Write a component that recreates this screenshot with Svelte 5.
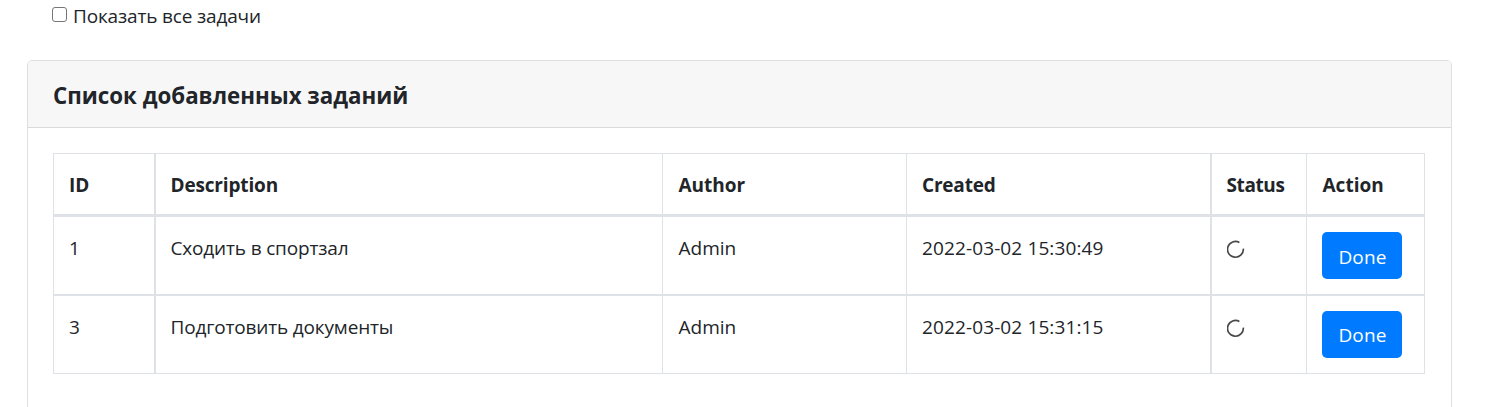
<script>
  const columns = ['ID', 'Description', 'Author', 'Created', 'Status', 'Action'];
  const widths = [103, 507, 244, 305, 95, 118];
  const tasks = [
    { id: 1, description: 'Сходить в спортзал', author: 'Admin', created: '2022-03-02 15:30:49' },
    { id: 3, description: 'Подготовить документы', author: 'Admin', created: '2022-03-02 15:31:15' }
  ];
  let showAll = $state(false);
</script>

<main>
  <label class="filter">
    <input type="checkbox" bind:checked={showAll} />
    <span>Показать все задачи</span>
  </label>

  <section class="card">
    <header><h1>Список добавленных заданий</h1></header>
    <table>
      <colgroup>
        {#each widths as width}<col style="width: {width}px" />{/each}
      </colgroup>
      <thead>
        <tr>
          {#each columns as name}<th>{name}</th>{/each}
        </tr>
      </thead>
      <tbody>
        {#each tasks as task}
          <tr>
            <td>{task.id}</td>
            <td class="task">{task.description}</td>
            <td>{task.author}</td>
            <td class="date">{task.created}</td>
            <td>
              <svg class="progress" width="18" height="20" viewBox="0 0 18 20" fill="none" stroke="#484848" stroke-width="1.7">
                <path d="M12.4 3.5A7.9 7.9 0 1 0 16.3 9.6" />
              </svg>
            </td>
            <td class="action-cell"><button type="button">Done</button></td>
          </tr>
        {/each}
      </tbody>
    </table>
  </section>
</main>

<style>
  :global(body) { margin: 0; background: #fff; overflow: hidden; }
  main {
    box-sizing: border-box;
    height: 407px;
    padding: 0 44px 0 27px;
    overflow: hidden;
    color: #212529;
    font: 19px/30px "Segoe UI", "Open Sans", "Noto Sans", sans-serif;
  }
  .filter { display: flex; height: 60px; padding-left: 25px; }
  .filter input {
    appearance: none;
    box-sizing: border-box;
    width: 15px;
    height: 15px;
    margin: 7px 6px 0 0;
    border: 1px solid #767676;
    border-radius: 3px;
    background: #fff;
  }
  .filter input:checked { background: #007bff; }
  .filter span { padding-top: 1px; letter-spacing: -0.16px; }
  .card {
    box-sizing: border-box;
    height: 400px;
    border: 1px solid #dfdfdf;
    border-radius: 5px;
  }
  header {
    box-sizing: border-box;
    height: 67px;
    padding: 20px 25px 18px;
    border-bottom: 1px solid #dadada;
    border-radius: 4px 4px 0 0;
    background: #f7f7f7;
  }
  h1 { margin: 0; font-size: 22.3px; font-weight: 700; line-height: 30px; white-space: nowrap; }
  table {
    width: 1372px;
    margin: 25px 0 0 25px;
    border-collapse: separate;
    border-spacing: 0;
    table-layout: fixed;
  }
  th, td {
    box-sizing: border-box;
    padding: 16px 0 0 15px;
    border: 0 solid #dee2e6;
    border-right-width: 1px;
    text-align: left;
    vertical-align: top;
    white-space: nowrap;
  }
  th { height: 64px; border-top-width: 1px; border-bottom-width: 3px; font-weight: 700; }
  td { height: 79px; border-bottom-width: 2px; }
  tr:last-child td { height: 78px; border-bottom-width: 1px; }
  th:first-child, td:first-child { border-left-width: 1px; }
  th:first-child, td:first-child, th:nth-child(4), td:nth-child(4) { border-right-width: 2px; }
  th:nth-child(2), .task { padding-left: 14.5px; letter-spacing: -0.16px; }
  th:nth-child(3), td:nth-child(3) { padding-left: 15.5px; }
  th:nth-child(4) { letter-spacing: -0.2px; }
  th:nth-child(5), td:nth-child(5) { padding-left: 14.5px; }
  th:nth-child(5) { letter-spacing: -0.4px; }
  th:nth-child(6) { padding-left: 15.5px; }
  .date { letter-spacing: 0.12px; }
  .progress { display: block; margin-top: 6px; }
  .action-cell { padding-top: 15px; }
  button {
    display: block;
    width: 80px;
    height: 47px;
    padding: 3px 0 0 1px;
    border: 0;
    border-radius: 5px;
    background: #007bff;
    color: #fff;
    font: inherit;
    letter-spacing: 0.15px;
  }
  tr:last-child button { padding-top: 1px; }
</style>
